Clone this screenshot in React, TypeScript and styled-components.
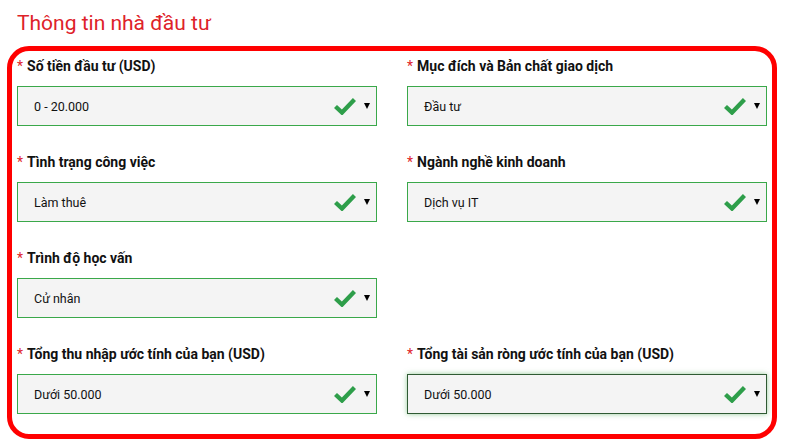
import React from "react";
import styled, { createGlobalStyle } from "styled-components";

const Global = createGlobalStyle`
  html, body { margin: 0; padding: 0; background: #ffffff; }
  body { font-family: Roboto, "Liberation Sans", Arial, sans-serif; }
`;

const Page = styled.div`
  width: 789px;
  height: 445px;
  box-sizing: border-box;
  padding: 10px 0 0 7px;
`;

const Title = styled.h2`
  margin: 0 0 10px 10px;
  font-family: Roboto, "Liberation Sans", sans-serif;
  font-weight: 400;
  font-size: 21px;
  line-height: 26px;
  color: #de2229;
`;

const Panel = styled.div`
  width: 770px;
  height: 393px;
  box-sizing: border-box;
  border: 5px solid #ff0000;
  border-radius: 22px;
  padding: 5px 5px 20px 5px;
  display: grid;
  grid-template-columns: 360px 360px;
  column-gap: 30px;
  row-gap: 26px;
  align-content: start;
`;

const Field = styled.div`
  display: flex;
  flex-direction: column;
`;

const Label = styled.label`
  font-weight: 700;
  font-size: 14px;
  line-height: 20px;
  color: #111;
  margin-bottom: 10px;
  white-space: nowrap;
`;

const Star = styled.span`
  color: #e0232a;
  font-weight: 400;
  margin-right: 4px;
`;

const Select = styled.div<{ $focused?: boolean }>`
  height: 40px;
  box-sizing: border-box;
  border: 1px solid ${(p) => (p.$focused ? "#2f5a33" : "#3aa84a")};
  background: #f4f4f4;
  box-shadow: ${(p) => (p.$focused ? "0 0 5px rgba(60, 160, 70, 0.55)" : "none")};
  display: flex;
  align-items: center;
  padding: 0 6px 0 16px;
`;

const Value = styled.span`
  flex: 1;
  font-size: 12.5px;
  color: #111;
`;

const Check = styled.svg`
  width: 22px;
  height: 18px;
  margin-right: 8px;
`;

const Arrow = styled.span`
  width: 0;
  height: 0;
  border-left: 3.5px solid transparent;
  border-right: 3.5px solid transparent;
  border-top: 6px solid #000;
  margin-top: -1px;
`;

const Empty = styled.div``;

type F = { label: string; value: string; focused?: boolean } | null;

const fields: F[] = [
  { label: "Số tiền đầu tư (USD)", value: "0 - 20.000" },
  { label: "Mục đích và Bản chất giao dịch", value: "Đầu tư" },
  { label: "Tình trạng công việc", value: "Làm thuê" },
  { label: "Ngành nghề kinh doanh", value: "Dịch vụ IT" },
  { label: "Trình độ học vấn", value: "Cử nhân" },
  null,
  { label: "Tổng thu nhập ước tính của bạn (USD)", value: "Dưới 50.000" },
  { label: "Tổng tài sản ròng ước tính của bạn (USD)", value: "Dưới 50.000", focused: true },
];

export default function App() {
  return (
    <Page>
      <Global />
      <Title>Thông tin nhà đầu tư</Title>
      <Panel>
        {fields.map((f, i) =>
          f ? (
            <Field key={i}>
              <Label>
                <Star>*</Star>
                {f.label}
              </Label>
              <Select $focused={f.focused}>
                <Value>{f.value}</Value>
                <Check viewBox="0 0 22 18">
                  <path d="M1.5 9.5 L8 15.5 L20.5 2.5" fill="none" stroke="#2e9e4a" strokeWidth="4.4" />
                </Check>
                <Arrow />
              </Select>
            </Field>
          ) : (
            <Empty key={i} />
          )
        )}
      </Panel>
    </Page>
  );
}
